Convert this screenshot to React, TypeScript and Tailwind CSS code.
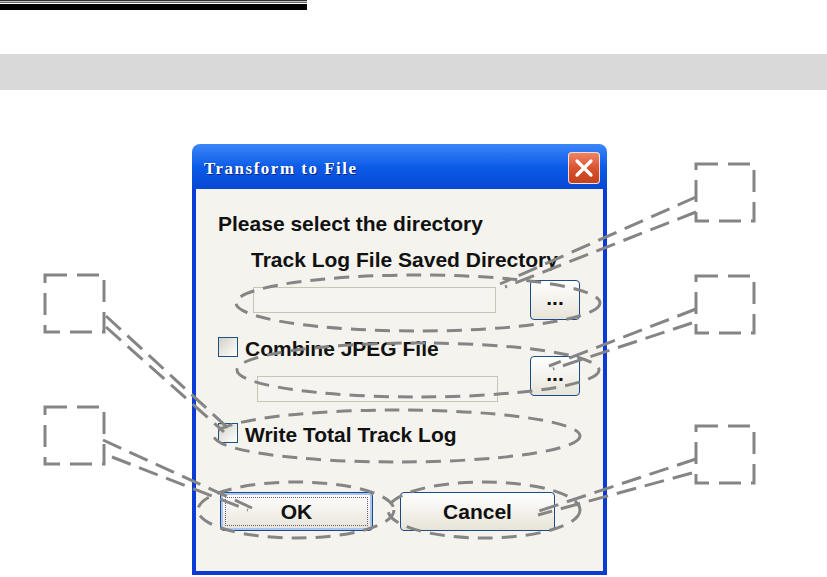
const label = "font-['Liberation_Sans',Arial,sans-serif] font-bold text-[21px] leading-[24px] text-[#111] whitespace-nowrap";

function Checkbox() {
  return <div className="w-[20px] h-[20px] shrink-0 border border-[#1c5180] bg-linear-to-br from-[#d3d1c6] to-white" />;
}

function DotsButton() {
  return (
    <div className={`w-[50px] h-[40px] shrink-0 rounded-[4px] border border-[#1d4a86] bg-linear-to-b from-white to-[#e7e4d8] flex items-center justify-center ${label} leading-none pb-[6px]`}>
      ...
    </div>
  );
}

function TextField({ className }: { className: string }) {
  return <div className={`h-[26px] border border-[#c8c5b5] bg-[#f5f4f0] ${className}`} />;
}

export default function App() {
  const gray = '#858585';
  return (
    <div className="relative w-[827px] h-[577px] overflow-hidden bg-white">
      {/* rules at top */}
      <div className="w-[307px]">
        <div className="h-px bg-[#333]" />
        <div className="h-px bg-[#c4c4c4]" />
        <div className="h-px bg-[#666]" />
        <div className="h-px bg-white" />
        <div className="h-[6px] bg-black" />
      </div>

      <div className="mt-[44px] h-[36px] bg-[#d9d9d9]" />

      {/* dialog */}
      <div className="mt-[54px] ml-[192px] w-[415px] flex flex-col">
        <div className="h-[45px] rounded-t-[8px] bg-linear-to-b from-[#3a86f8] via-[#0b5ce8] to-[#0747d2] flex items-start justify-between pl-[12px] pr-[7px]">
          <span className="mt-[15px] font-['Liberation_Serif',serif] font-bold text-[17px] leading-[20px] tracking-[1.5px] text-white [text-shadow:1px_1px_0_#0a2380]">
            Transform to File
          </span>
          <div className="mt-[8px] w-[32px] h-[32px] rounded-[4px] border border-white/80 bg-linear-to-b from-[#ec8466] via-[#d9532f] to-[#c2421f] flex items-center justify-center">
            <svg width="20" height="20" viewBox="0 0 20 20">
              <path d="M3 3 L17 17 M17 3 L3 17" stroke="white" strokeWidth="3.2" strokeLinecap="round" />
            </svg>
          </div>
        </div>

        <div className="h-[386px] border-x-4 border-b-4 border-[#0a3bd6] bg-[#f4f3ee] flex flex-col">
          <div className={`mt-[23px] ml-[22px] ${label}`}>Please select the directory</div>
          <div className={`mt-[12px] ml-[55px] ${label}`}>Track Log File Saved Directory</div>

          <div className="mt-[8px] flex items-start">
            <TextField className="mt-[7px] ml-[57px] w-[243px]" />
            <div className="ml-[34px]"><DotsButton /></div>
          </div>

          <div className="mt-[17px] flex items-start">
            <div className="ml-[22px] flex flex-col">
              <div className="flex items-start gap-[7px]">
                <Checkbox />
                <span className={label}>Combine JPEG File</span>
              </div>
              <TextField className="mt-[15px] ml-[39px] w-[241px]" />
            </div>
            <div className="ml-[32px] mt-[19px]"><DotsButton /></div>
          </div>

          <div className="mt-[21px] ml-[22px] flex items-start gap-[7px]">
            <Checkbox />
            <span className={label}>Write Total Track Log</span>
          </div>

          <div className="mt-[45px] ml-[24px] flex gap-[27px]">
            <div className={`relative w-[153px] h-[39px] rounded-[4px] border border-[#1d4a86] bg-linear-to-b from-white to-[#e7e4d8] shadow-[inset_0_0_0_2px_#a9c4f0] flex items-center justify-center ${label}`}>
              OK
              <span className="absolute inset-[4px] border border-dotted border-[#6b5a7a]" />
            </div>
            <div className={`w-[155px] h-[39px] rounded-[4px] border border-[#1d4a86] bg-linear-to-b from-white to-[#e7e4d8] flex items-center justify-center ${label}`}>
              Cancel
            </div>
          </div>
        </div>
      </div>

      {/* annotations */}
      <svg className="absolute inset-0 pointer-events-none" width="827" height="577" viewBox="0 0 827 577" fill="none">
        <g stroke={gray} strokeWidth="3">
          <g strokeDasharray="15 9">
            <ellipse cx="418" cy="303" rx="182" ry="28" />
            <ellipse cx="418" cy="370" rx="181" ry="27" />
            <ellipse cx="397" cy="436" rx="183" ry="26" />
            <ellipse cx="296" cy="510" rx="98" ry="28" />
            <ellipse cx="484" cy="510" rx="96" ry="28" />
          </g>
          <g strokeDasharray="22 10">
            <rect x="696" y="164" width="58" height="57" />
            <rect x="696" y="276" width="58" height="57" />
            <rect x="696" y="426" width="58" height="57" />
            <rect x="45" y="275" width="59" height="57" />
            <rect x="45" y="407" width="59" height="57" />
          </g>
          <g strokeDasharray="20 9">
            <line x1="696" y1="197" x2="500" y2="284" />
            <line x1="696" y1="212" x2="505" y2="287" />
            <line x1="696" y1="309" x2="549" y2="366" />
            <line x1="692" y1="323" x2="553" y2="369" />
            <line x1="696" y1="459" x2="533" y2="513" />
            <line x1="692" y1="473" x2="538" y2="515" />
            <line x1="106" y1="316" x2="228" y2="428" />
            <line x1="106" y1="327" x2="224" y2="432" />
            <line x1="103" y1="440" x2="252" y2="508" />
            <line x1="112" y1="457" x2="248" y2="510" />
          </g>
        </g>
      </svg>
    </div>
  );
}
